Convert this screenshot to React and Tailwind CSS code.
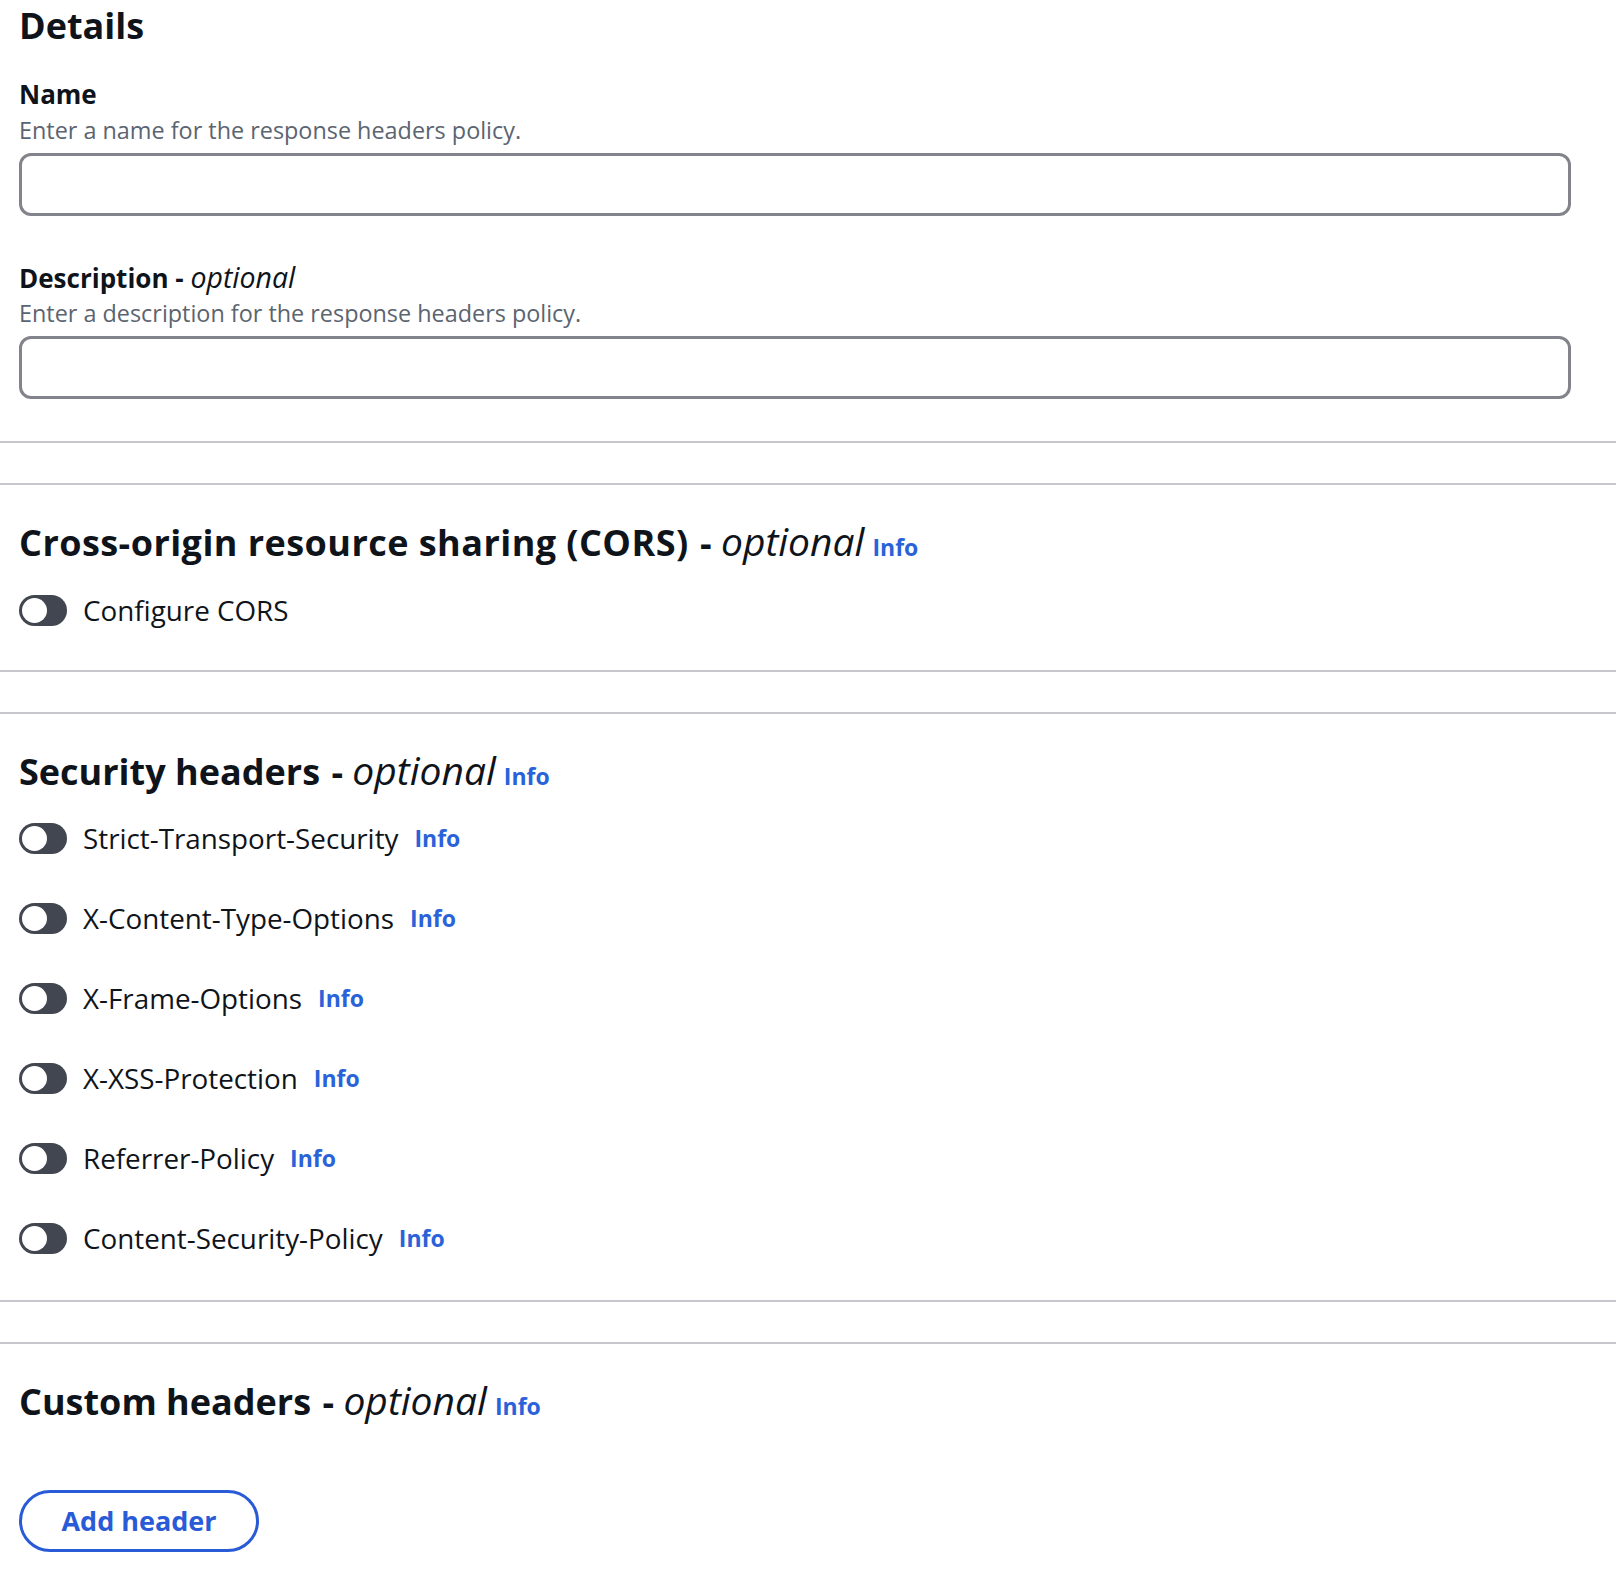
import { useState } from 'react';

const font = { fontFamily: '"Open Sans", "Noto Sans", sans-serif' };

function Info({ className = '' }) {
  return <a className={`font-bold text-[#2a62d9] text-[23px] leading-none ${className}`}>Info</a>;
}

function Toggle({ label }) {
  const [on, setOn] = useState(false);
  return (
    <div className="flex items-center h-[31px]">
      <button
        onClick={() => setOn(!on)}
        className={`relative w-[48px] h-[31px] rounded-full shrink-0 ${on ? 'bg-[#2a62d9]' : 'bg-[#424650]'}`}
      >
        <span
          className={`absolute top-[3px] w-[25px] h-[25px] rounded-full bg-white ${on ? 'left-[20px]' : 'left-[3px]'}`}
        />
      </button>
      <span className="ml-[16px] text-[27.8px] text-[#0f141a] leading-[31px]">{label}</span>
    </div>
  );
}

function Heading({ children, wide }) {
  return (
    <h2 className="h-[44px] text-[36px] leading-[44px] font-bold text-[#0f141a] flex items-baseline whitespace-nowrap">
      <span>
        <span className={wide ? 'tracking-[0.45px]' : ''}>{children}</span>{' '}
        <span className="ml-[2px]">-</span>{' '}
        <i className="font-normal text-[39px]">optional</i>
      </span>
      <Info className="ml-[8px]" />
    </h2>
  );
}

function Field({ label, optional, hint }) {
  return (
    <div>
      <div className="h-[36px] text-[26px] leading-[36px] font-bold text-[#0f141a] whitespace-nowrap">
        {label}
        {optional && <> - <i className="font-normal text-[28.5px]">optional</i></>}
      </div>
      <div className="h-[36px] text-[23.4px] leading-[36px] text-[#5b6470]">{hint}</div>
      <input className="mt-[5px] block w-[1552px] h-[63px] border-[3px] border-[#83848b] rounded-[12px] bg-white px-4 text-[24px] outline-none" />
    </div>
  );
}

const security = [
  'Strict-Transport-Security',
  'X-Content-Type-Options',
  'X-Frame-Options',
  'X-XSS-Protection',
  'Referrer-Policy',
  'Content-Security-Policy',
];

export default function App() {
  return (
    <div style={font} className="min-h-[1572px] bg-white overflow-hidden">
      {/* Details */}
      <section className="pl-[19px] pt-[4px] pb-[42px] border-b-2 border-[#c6c6cd]">
        <h2 className="h-[44px] text-[36px] leading-[44px] font-bold text-[#0f141a]">Details</h2>
        <div className="mt-[28px]">
          <Field label="Name" hint="Enter a name for the response headers policy." />
        </div>
        <div className="mt-[43px]">
          <Field label="Description" optional hint="Enter a description for the response headers policy." />
        </div>
      </section>

      {/* CORS */}
      <section className="mt-[40px] pl-[19px] pt-[34px] pb-[44px] border-y-2 border-[#c6c6cd]">
        <Heading wide>Cross-origin resource sharing (CORS)</Heading>
        <div className="mt-[32px]">
          <Toggle label="Configure CORS" />
        </div>
      </section>

      {/* Security headers */}
      <section className="mt-[40px] pl-[19px] pt-[34px] pb-[46px] border-y-2 border-[#c6c6cd]">
        <Heading>Security headers</Heading>
        <div className="mt-[31px] flex flex-col gap-[49px]">
          {security.map(h => (
            <div key={h} className="flex items-center h-[31px]">
              <Toggle label={h} />
              <Info className="ml-[16px]" />
            </div>
          ))}
        </div>
      </section>

      {/* Custom headers */}
      <section className="mt-[40px] pl-[19px] pt-[34px] pb-[30px] border-t-2 border-[#c6c6cd]">
        <Heading>Custom headers</Heading>
        <button className="mt-[68px] w-[240px] h-[62px] rounded-full border-[3px] border-[#2a5bd7] text-[#2a5bd7] text-[27px] font-bold">
          Add header
        </button>
      </section>
    </div>
  );
}
